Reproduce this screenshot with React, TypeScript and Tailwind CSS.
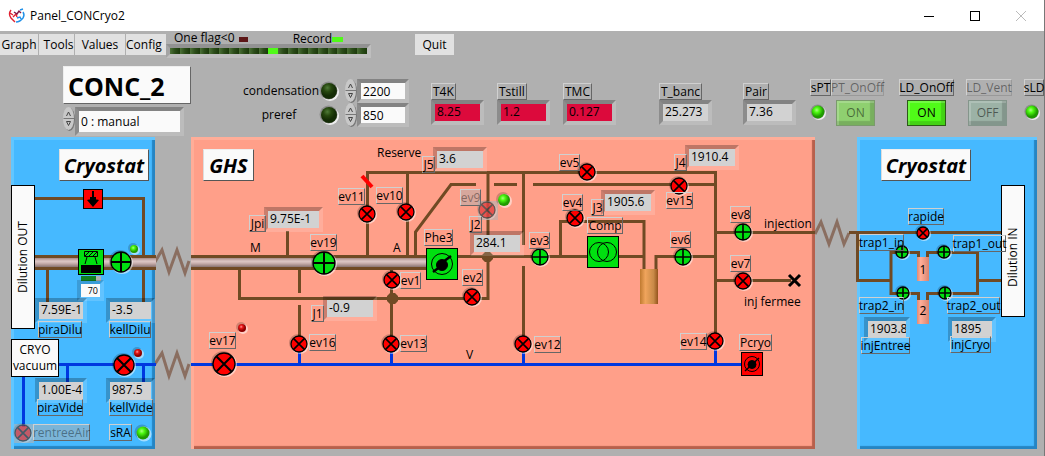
import type { ReactNode } from "react"
import clsx from "clsx"

const PIPE = "#704a24"
const VACUUM = "#0038e0"

type Item = { text: string; at: string; disabled?: boolean }
type Reading = { id: string; value: string; at: string; label: string; labelAt: string }

/* ---------- small drawing parts ---------- */

function Valve({ x, y, r = 8, open = false, faded = false }: { x: number; y: number; r?: number; open?: boolean; faded?: boolean }) {
  const d = open ? r : r * 0.7
  return (
    <g>
      {faded && <rect x={x - 9} y={y - 9} width="20" height="19" fill="#b4b4b4" opacity="0.6" />}
      <g opacity={faded ? 0.5 : 1}>
        <circle cx={x - 1} cy={y - 1} r={r + 1} fill="#000" opacity="0.2" />
        <circle cx={x + 1} cy={y + 1} r={r + 1} fill="#fff" opacity="0.5" />
        <circle cx={x} cy={y} r={r} fill={open ? "#00e010" : "#ff0000"} stroke="#000" strokeWidth="1.3" />
        <path
          d={
            open
              ? `M${x - d} ${y}H${x + d}M${x} ${y - d}V${y + d}`
              : `M${x - d} ${y - d}L${x + d} ${y + d}M${x + d} ${y - d}L${x - d} ${y + d}`
          }
          stroke="#000"
          strokeWidth={r > 9 ? 2 : 1.6}
        />
      </g>
    </g>
  )
}

function Bulb({ x, y, r, color = "green" }: { x: number; y: number; r: number; color?: "green" | "red" }) {
  return (
    <g>
      <circle cx={x - 1} cy={y - 1} r={r + 1} fill="#000" opacity="0.18" />
      <circle cx={x + 1} cy={y + 1} r={r + 1} fill="#fff" opacity="0.5" />
      <circle cx={x} cy={y} r={r} fill={`url(#led-${color})`} />
    </g>
  )
}

const pipeShades = ["#b09490", "#c3a8a6", "#d2bab8", "#dac4c2", "#d2bab8", "#c5acaa", "#b59c9a", "#a38c8a", "#927c7a"]

function BigPipe({ from, to }: { from: number; to: number }) {
  return (
    <g>
      <line x1={from} x2={to} y1="119.5" y2="119.5" stroke={PIPE} strokeWidth="3" />
      {pipeShades.map((c, i) => (
        <line key={c + i} x1={from} x2={to} y1={121.5 + i} y2={121.5 + i} stroke={c} strokeWidth="1" />
      ))}
      <line x1={from} x2={to} y1="131.5" y2="131.5" stroke={PIPE} strokeWidth="3" />
    </g>
  )
}

function Gradients() {
  return (
    <svg className="absolute h-0 w-0" aria-hidden="true">
      <defs>
        <radialGradient id="led-green" cx="0.4" cy="0.35">
          <stop offset="0" stopColor="#a8ff80" />
          <stop offset="0.4" stopColor="#4dfa10" />
          <stop offset="1" stopColor="#1f9a00" />
        </radialGradient>
        <radialGradient id="led-red" cx="0.4" cy="0.35">
          <stop offset="0" stopColor="#ff9a9a" />
          <stop offset="0.4" stopColor="#e81818" />
          <stop offset="1" stopColor="#8a0000" />
        </radialGradient>
        <radialGradient id="led-off" cx="0.4" cy="0.3">
          <stop offset="0" stopColor="#4f7a38" />
          <stop offset="0.5" stopColor="#26470f" />
          <stop offset="1" stopColor="#142c06" />
        </radialGradient>
        <linearGradient id="copper">
          <stop offset="0" stopColor="#c07a30" />
          <stop offset="0.3" stopColor="#f0a45c" />
          <stop offset="0.75" stopColor="#c98a48" />
          <stop offset="1" stopColor="#94541c" />
        </linearGradient>
        <linearGradient id="trap">
          <stop offset="0" stopColor="#e08a74" />
          <stop offset="0.3" stopColor="#ffae98" />
          <stop offset="1" stopColor="#d88470" />
        </linearGradient>
      </defs>
    </svg>
  )
}

/* ---------- labels, readings, inputs ---------- */

const tagStyle =
  "flex h-[17px] items-center justify-center whitespace-nowrap border border-t-[#d0d0d0] border-l-[#d0d0d0] border-r-[#666] border-b-[#666] pt-px text-xs leading-4"

function Tag({ text, at, disabled }: Item) {
  return <span className={clsx("absolute", tagStyle, at, disabled && "bg-[#b0b0b0]/50 text-black/40")}>{text}</span>
}

const sunken =
  "block overflow-hidden border-4 border-t-black/25 border-l-black/20 border-r-white/15 border-b-white/15 bg-clip-padding text-xs leading-4 whitespace-nowrap"

function Readout({ id, value, at, label, labelAt }: Reading) {
  return (
    <>
      <output id={id} className={clsx("absolute h-[25px] bg-[#d2d2d2] pl-0.5", sunken, at)}>
        {value}
      </output>
      <label htmlFor={id} className={clsx("absolute", tagStyle, labelAt)}>
        {label}
      </label>
    </>
  )
}

function Spinner() {
  return (
    <svg className="h-6 w-3 shrink-0" viewBox="0 0 12 24" aria-hidden="true">
      <ellipse cx="6.5" cy="12.5" rx="5.5" ry="11.5" fill="#777" />
      <ellipse cx="5.5" cy="11.5" rx="5.5" ry="11.5" fill="#c8c8c8" />
      <path d="M0.500 11.500H11" stroke="#777" />
      <path d="M3.500 9L5.500 5L7.500 9M3.500 14.500H7.500L5.500 18.500Z" fill="none" stroke="#444" />
    </svg>
  )
}

function StatusLed({ off }: { off?: boolean }) {
  return (
    <svg className={off ? "h-5 w-5 shrink-0" : "h-4 w-4 shrink-0"} viewBox="0 0 20 20" aria-hidden="true">
      <circle cx="11" cy="11" r="9" fill="#eee" />
      <circle cx="9.5" cy="9.5" r="9" fill="#8d8d8d" />
      <circle cx="10" cy="10" r="8" fill={off ? "url(#led-off)" : "url(#led-green)"} />
    </svg>
  )
}

function Setpoint({ id, label, value }: { id: string; label: string; value: string }) {
  return (
    <div className="flex h-6 items-center">
      <label htmlFor={id} className="w-[72px] text-center text-xs">
        {label}
      </label>
      <span className="ml-1 flex w-[26px] items-center">
        <StatusLed off />
      </span>
      <Spinner />
      <input id={id} defaultValue={value} className={clsx("h-6 w-[52px] bg-[#fafafa] pl-0.5", sunken)} />
    </div>
  )
}

function Gauge({ id, label, value, alarm, className }: { id: string; label: string; value: string; alarm?: boolean; className?: string }) {
  return (
    <div className={clsx("flex w-[53px] shrink-0 flex-col items-start", className)}>
      <label htmlFor={id} className={clsx(tagStyle, "px-px")}>
        {label}
      </label>
      <output id={id} className={clsx("h-[25px] w-full pl-0.5", sunken, alarm ? "bg-[#dc0a3c]" : "bg-[#d2d2d2]")}>
        {value}
      </output>
    </div>
  )
}

function Switch({ label, state, className, tone, disabled }: { label: string; state: string; className: string; tone: string; disabled?: boolean }) {
  return (
    <div className={clsx("flex shrink-0 flex-col", className)}>
      <span id={label} className={clsx(tagStyle, disabled && "border-r-[#999] border-b-[#999] text-black/45")}>
        {label}
      </span>
      <button
        type="button"
        aria-describedby={label}
        disabled={disabled}
        className={clsx("mt-1 flex h-[26px] w-[39px] items-center justify-center border text-xs shadow-[inset_2px_2px_0_#ffffff30,inset_-4px_-4px_1px_#00000028]", tone)}
      >
        {state}
      </button>
    </div>
  )
}

function PanelTitle({ children, at }: { children: ReactNode; at: string }) {
  return (
    <h2
      className={clsx(
        "absolute flex h-8 items-center justify-center border border-t-[#eee] border-l-[#ddd] border-r-[#555] border-b-[#555] bg-[#fafafa] pt-0.5 text-xl leading-6 font-bold italic",
        at
      )}
    >
      {children}
    </h2>
  )
}

/* ---------- header ---------- */

function TitleBar() {
  return (
    <header className="flex h-[31px] items-center bg-white">
      <svg className="ml-2 h-4 w-[18px]" viewBox="0 0 18 16" fill="none" strokeWidth="1.4" aria-hidden="true">
        <path d="M3 2Q0 6 3 10L7 14M2 5L5 7M5 9L8 6L9 9" stroke="#e02030" />
        <path d="M6 4L9 6L11 3L13 5" stroke="#801848" />
        <path d="M12 2L15 1M15 4Q17 7 15 10Q12 14 8 14M9 10L12 9L13 11" stroke="#2090e8" />
      </svg>
      <h1 className="ml-1 text-xs">Panel_CONCryo2</h1>
      <div className="ml-auto flex">
        <button type="button" aria-label="Minimize" className="flex h-7 w-[46px] items-center justify-center">
          <svg className="h-3 w-3" viewBox="0 0 12 12" stroke="#000"><path d="M1 6.500H11" /></svg>
        </button>
        <button type="button" aria-label="Maximize" className="flex h-7 w-[46px] items-center justify-center">
          <svg className="h-3 w-3" viewBox="0 0 12 12" fill="none" stroke="#000"><rect x="1.5" y="1.5" width="9" height="9" /></svg>
        </button>
        <button type="button" aria-label="Close" disabled className="flex h-7 w-[46px] items-center justify-center">
          <svg className="h-3 w-3" viewBox="0 0 12 12" stroke="#bbb"><path d="M1 1L11 11M11 1L1 11" /></svg>
        </button>
      </div>
    </header>
  )
}

const menuButton = "flex h-[21px] items-center justify-center overflow-hidden bg-[#e1e1e1] text-xs"

function Toolbar() {
  return (
    <div className="flex h-[35px] items-start">
      <nav className="mt-[3px] flex gap-px">
        <button type="button" className={clsx(menuButton, "w-[38px]")}>Graph</button>
        <button type="button" className={clsx(menuButton, "w-[35px] pl-1")}>Tools</button>
        <button type="button" className={clsx(menuButton, "w-[50px]")}>Values</button>
        <button type="button" className={clsx(menuButton, "w-10 justify-start")}>Config</button>
      </nav>
      <div className="w-[205px]">
        <div className="flex h-[13px] items-center pl-2 text-xs leading-3">
          <span>One flag&lt;0</span>
          <i className="mt-1 ml-1 h-[5px] w-[9px] bg-[#5c1616]" />
          <span className="mt-0.5 ml-auto">Record</span>
          <i className="mt-1 mr-7 h-[5px] w-[11px] bg-[#50fa18]" />
        </div>
        <div className="flex h-3.5 border-4 border-t-[#929292] border-l-[#a4a4a4] border-r-[#bebebe] border-b-[#bebebe]">
          {Array.from({ length: 20 }, (_, i) => (
            <i
              key={i}
              className={clsx(
                "h-1.5 flex-1",
                i === 10 ? "bg-[#50fa18]" : "bg-linear-to-r from-[#4d7238] via-[#2c4d1a] to-[#1c3a0c]"
              )}
            />
          ))}
        </div>
      </div>
      <button type="button" className={clsx(menuButton, "mt-[3px] ml-11 w-[39px]")}>Quit</button>
    </div>
  )
}

function StatusRow() {
  return (
    <div className="flex h-[71px] items-start">
      <div className="ml-[63px] w-32 shrink-0">
        <div className="flex h-[38px] items-center border border-t-[#eee] border-l-[#eee] border-r-[#666] border-b-[#666] bg-[#fafafa] pt-1 pl-1 text-[25px] font-bold">
          CONC_2
        </div>
        <div className="flex items-start pt-[3px]">
          <Spinner />
          <select
            aria-label="mode"
            className={clsx("h-[29px] w-[109px] appearance-none bg-[#fafafa] pl-0.5", sunken)}
          >
            <option>0 : manual</option>
          </select>
        </div>
      </div>

      <div className="mt-[13px] ml-[52px] shrink-0">
        <Setpoint id="condensation" label="condensation" value="2200" />
        <Setpoint id="preref" label="preref" value="850" />
      </div>

      <div className="mt-[17px] ml-[22px] flex">
        <Gauge id="t4k" label="T4K" value="8.25" alarm />
        <Gauge id="tstill" label="Tstill" value="1.2" alarm className="ml-[13px]" />
        <Gauge id="tmc" label="TMC" value="0.127" alarm className="ml-[13px]" />
        <Gauge id="tbanc" label="T_banc" value="25.273" className="ml-[43px]" />
        <Gauge id="pair" label="Pair" value="7.36" className="ml-[31px]" />
      </div>

      <div className="mt-[13px] ml-auto flex">
        <div className="w-[21px] shrink-0">
          <span className={tagStyle}>sPT</span>
          <div className="mt-2"><StatusLed /></div>
        </div>
        <Switch label="PT_OnOff" state="ON" disabled className="w-[53px] [&>button]:ml-[5px]" tone="border-[#7a9a6c] bg-[#8fd070] text-black/50" />
        <Switch label="LD_OnOff" state="ON" className="ml-[15px] w-[55px] [&>button]:ml-2" tone="border-[#2c5a18] bg-[#50fa18]" />
        <Switch label="LD_Vent" state="OFF" disabled className="ml-3 w-[46px] [&>button]:ml-0.5" tone="border-[#84958b] bg-[#9cb2a6] text-black/50" />
        <div className="ml-3 w-5 shrink-0">
          <span className={tagStyle}>sLD</span>
          <div className="mt-2"><StatusLed /></div>
        </div>
      </div>
    </div>
  )
}

/* ---------- left cryostat ---------- */

const outReadings: Reading[] = [
  { id: "piraDilu", value: "7.59E-1", at: "left-[24px] top-[161px] w-[52px]", label: "piraDilu", labelAt: "left-[27px] top-[184px] w-[44px]" },
  { id: "kellDilu", value: "-3.5", at: "left-[95px] top-[161px] w-[49px]", label: "kellDilu", labelAt: "left-[98px] top-[184px] w-[42px]" },
  { id: "piraVide", value: "1.00E-4", at: "left-[24px] top-[241px] w-[52px]", label: "piraVide", labelAt: "left-[26px] top-[262px] w-[46px]" },
  { id: "kellVide", value: "987.5", at: "left-[95px] top-[241px] w-[49px]", label: "kellVide", labelAt: "left-[98px] top-[262px] w-[44px]" },
]

function CryostatOut() {
  return (
    <section className="relative w-36 shrink-0 bg-[#46b9ff] shadow-[inset_3px_3px_0_#62c6ff,inset_-3px_-3px_1px_#2585c4]">
      <svg className="block h-78 w-full overflow-visible" fill="none" strokeWidth="3" aria-hidden="true">
        <path d="M24 61.500H132.500V119M36.500 132V165M132.500 132V165" stroke={PIPE} />
        <BigPipe from={24} to={145} />
        <path d="M48 227.500H145M12.500 240V290M56.500 227V245M132.500 227V245" stroke={VACUUM} />
        <rect x="72.5" y="52.5" width="19" height="19" fill="#f00" stroke="#000" strokeWidth="1" />
        <path d="M82 54V61" stroke="#000" strokeWidth="2" />
        <path d="M76 63L80 62H84L88 63L82 70ZM79 60H85V66H79Z" fill="#000" />
        <rect x="67.5" y="112.5" width="25" height="25" fill="#00e010" stroke="#000" strokeWidth="1" />
        <path d="M73.500 114.500H86.500V119.500H73.500ZM74 119L78 115M78 119L82 115M82 119L86 115M76 120L74 127M84 120L86 127" stroke="#000" strokeWidth="1" />
        <rect x="70" y="128" width="20" height="8" fill="#000" />
        <rect x="70" y="139" width="20" height="5" fill="#b0b0b0" />
        <rect x="70" y="139" width="15" height="5" fill="#108020" />
        <Valve x={110} y={125} r={10} open />
        <Bulb x={123} y={112} r={4} />
        <Valve x={113} y={228} r={10} />
        <Bulb x={127} y={216} r={4} color="red" />
        <Valve x={12} y={296} faded />
        <Bulb x={132} y={296} r={6.5} />
      </svg>
      <PanelTitle at="left-[48px] top-[12px] w-[90px]">Cryostat</PanelTitle>
      <div className="absolute top-12 left-0 flex h-36 w-6 rotate-180 items-center justify-center border border-black bg-[#fafafa] text-xs leading-4 [writing-mode:vertical-rl]">
        Dilution OUT
      </div>
      <div className="absolute top-[202px] left-0 flex h-[38px] w-12 flex-col items-center justify-center border border-black bg-[#fafafa] text-xs leading-4">
        <span>CRYO</span>
        <span>vacuum</span>
      </div>
      <input
        aria-label="speed"
        defaultValue="70"
        className="absolute top-[143px] left-[66px] h-[21px] w-[27px] border-4 border-t-black/15 border-l-black/15 border-r-white/15 border-b-white/15 bg-[#fafafa] bg-clip-padding pr-0.5 text-right text-[9px] leading-3"
      />
      {outReadings.map((r) => (
        <Readout key={r.id} {...r} />
      ))}
      <Tag text="rentreeAir" at="left-[22px] top-[287px] w-[57px]" disabled />
      <Tag text="sRA" at="left-[98px] top-[287px] w-[23px]" />
    </section>
  )
}

/* ---------- gas handling system ---------- */

const ghsReadings: Reading[] = [
  { id: "j5", value: "3.6", at: "left-[242px] top-[10px] w-[54px]", label: "J5", labelAt: "left-[231px] top-[19px] w-[13px]" },
  { id: "jpi", value: "9.75E-1", at: "left-[73px] top-[70px] w-[59px]", label: "Jpi", labelAt: "left-[58px] top-[78px] w-[17px]" },
  { id: "j2", value: "284.1", at: "left-[279px] top-[94px] w-[54px]", label: "J2", labelAt: "left-[278px] top-[79px] w-[13px]" },
  { id: "j4", value: "1910.4", at: "left-[494px] top-[8px] w-[54px]", label: "J4", labelAt: "left-[483px] top-[17px] w-[13px]" },
  { id: "j3", value: "1905.6", at: "left-[410px] top-[53px] w-[54px]", label: "J3", labelAt: "left-[400px] top-[62px] w-[13px]" },
  { id: "j1", value: "-0.9", at: "left-[132px] top-[159px] w-[54px]", label: "J1", labelAt: "left-[120px] top-[168px] w-[13px]" },
]

const ghsTags: Item[] = [
  { text: "ev11", at: "left-[147px] top-[51px] w-[27px]" },
  { text: "ev10", at: "left-[185px] top-[50px] w-[27px]" },
  { text: "ev9", at: "left-[269px] top-[52px] w-[21px]", disabled: true },
  { text: "Phe3", at: "left-[233px] top-[92px] w-[29px]" },
  { text: "ev3", at: "left-[338px] top-[95px] w-[21px]" },
  { text: "ev2", at: "left-[271px] top-[132px] w-[21px]" },
  { text: "ev1", at: "left-[209px] top-[135px] w-[21px]" },
  { text: "ev19", at: "left-[119px] top-[97px] w-[27px]" },
  { text: "ev5", at: "left-[368px] top-[17px] w-[21px]" },
  { text: "ev15", at: "left-[475px] top-[55px] w-[27px]" },
  { text: "ev4", at: "left-[371px] top-[57px] w-[21px]" },
  { text: "Comp", at: "left-[396px] top-[80px] w-[36px]" },
  { text: "ev6", at: "left-[479px] top-[94px] w-[21px]" },
  { text: "ev8", at: "left-[539px] top-[69px] w-[21px]" },
  { text: "ev7", at: "left-[539px] top-[118px] w-[21px]" },
  { text: "ev14", at: "left-[489px] top-[196px] w-[27px]" },
  { text: "Pcryo", at: "left-[548px] top-[197px] w-[33px]" },
  { text: "ev17", at: "left-[18px] top-[195px] w-[27px]" },
  { text: "ev16", at: "left-[118px] top-[197px] w-[27px]" },
  { text: "ev13", at: "left-[209px] top-[198px] w-[27px]" },
  { text: "ev12", at: "left-[343px] top-[199px] w-[27px]" },
]

const ghsNotes: Item[] = [
  { text: "Reserve", at: "left-[186px] top-[8px]" },
  { text: "M", at: "left-[59px] top-[103px]" },
  { text: "A", at: "left-[202px] top-[103px]" },
  { text: "injection", at: "left-[573px] top-[79px]" },
  { text: "inj fermee", at: "left-[553px] top-[157px]" },
  { text: "V", at: "left-[275px] top-[210px]" },
]

const ghsValves = [
  { x: 176, y: 77 },
  { x: 215, y: 75 },
  { x: 296, y: 73, faded: true },
  { x: 349, y: 120, open: true },
  { x: 281, y: 160 },
  { x: 201, y: 143 },
  { x: 133, y: 126, r: 11, open: true },
  { x: 396, y: 35 },
  { x: 488, y: 49 },
  { x: 384, y: 81 },
  { x: 492, y: 120, open: true },
  { x: 552, y: 95, open: true },
  { x: 552, y: 144 },
  { x: 524, y: 204 },
  { x: 33, y: 227, r: 11 },
  { x: 108, y: 207 },
  { x: 200, y: 207 },
  { x: 332, y: 207 },
]

function Ghs() {
  return (
    <section className="relative min-w-[624px] flex-1 bg-[#ff9f89] shadow-[inset_3px_3px_0_#ffad98,inset_-3px_-3px_1px_#b8604c]">
      <svg className="block h-78 w-full" fill="none" strokeWidth="3" aria-hidden="true">
        <g stroke={PIPE}>
          <path d="M176.500 119V35.500H524.500V205M216.500 36V119M96.500 94V119M48.500 132V161.500H297V36" />
          <path d="M108.500 132V156M108.500 168V206M224.500 119V95L260 47.500H285M303 47.500H326M342 47.500H524" />
          <path d="M332.500 36V108M332.500 129V206M266 119.500H454M369.500 120V84.500H453V132M465 132V119.500H524" />
          <path d="M524 143.500H600M200.500 130V206" />
          <line x1="524" x2="100%" y1="95.5" y2="95.5" />
        </g>
        <BigPipe from={0} to={236} />
        <path d="M0 227.500H550M108.500 208V227M200.500 208V227M332.500 208V227M524.500 208V227" stroke={VACUUM} />
        <path d="M199 156H204L207 159V164L204 167H199L196 164V159ZM294 115H299L302 118V122L299 125H294L291 122V118Z" fill={PIPE} />
        <path d="M171 39L181 50" stroke="#f00" strokeWidth="4" />
        <path d="M598 138L609 149M609 138L598 149" stroke="#000" />
        <rect x="449" y="132" width="18" height="35" fill="url(#copper)" />

        <g strokeWidth="1" stroke="#000">
          <rect x="235.5" y="111.5" width="31" height="31" fill="#00e010" />
          <circle cx="251" cy="127" r="10.5" />
          <circle cx="251" cy="128" r="5.5" fill="#000" />
          <path d="M242 135L250 129M252 125L260 119" strokeWidth="2.5" />
          <rect x="396.5" y="99.5" width="31" height="31" fill="#00e010" />
          <circle cx="408" cy="115" r="9.5" />
          <circle cx="416" cy="115" r="9.5" />
          <rect x="550.5" y="215.5" width="21" height="23" fill="#f00" />
          <circle cx="561" cy="227" r="7.5" />
          <circle cx="561" cy="227.5" r="4" fill="#000" />
          <path d="M554 234L568 221" strokeWidth="1.5" />
        </g>

        {ghsValves.map((v) => (
          <Valve key={`${v.x}-${v.y}`} {...v} />
        ))}
        <Bulb x={313} y={63} r={6} />
        <Bulb x={51} y={191} r={4} color="red" />
      </svg>
      <PanelTitle at="left-[12px] top-[12px] w-[51px]">GHS</PanelTitle>
      {ghsReadings.map((r) => (
        <Readout key={r.id} {...r} />
      ))}
      {ghsTags.map((t) => (
        <Tag key={t.text} {...t} />
      ))}
      {ghsNotes.map((n) => (
        <span key={n.text} className={clsx("absolute text-xs leading-4 whitespace-nowrap", n.at)}>
          {n.text}
        </span>
      ))}
    </section>
  )
}

/* ---------- right cryostat ---------- */

const inReadings: Reading[] = [
  { id: "injEntree", value: "1903.8", at: "left-[7px] top-[180px] w-[46px]", label: "injEntree", labelAt: "left-[4px] top-[200px] w-[49px]" },
  { id: "injCryo", value: "1895", at: "left-[91px] top-[180px] w-[48px]", label: "injCryo", labelAt: "left-[93px] top-[199px] w-[41px]" },
]

const inTags: Item[] = [
  { text: "rapide", at: "left-[51px] top-[71px] w-[36px]" },
  { text: "trap1_in", at: "left-[2px] top-[97px] w-[45px]" },
  { text: "trap1_out", at: "left-[96px] top-[98px] w-[53px]" },
  { text: "trap2_in", at: "left-[2px] top-[160px] w-[45px]" },
  { text: "trap2_out", at: "left-[90px] top-[160px] w-[53px]" },
]

function CryostatIn() {
  return (
    <section className="relative w-45 shrink-0 bg-[#46b9ff] shadow-[inset_3px_3px_0_#62c6ff,inset_-3px_-3px_1px_#2585c4]">
      <svg className="block h-78 w-full overflow-visible" fill="none" strokeWidth="3" aria-hidden="true">
        <path
          d="M0 95.500H144M0.500 95V143.500H34M61.500 120V115.500H34V156.500H61.500V163M70.500 120V115.500H120.500V156.500H70.500V163M120 143.500H144"
          stroke={PIPE}
        />
        <rect x="60" y="120" width="12" height="24" fill="url(#trap)" />
        <rect x="60" y="163" width="12" height="24" fill="url(#trap)" />
        <Valve x={66} y={96} r={6} />
        <Valve x={45} y={115} r={6} open />
        <Valve x={87} y={115} r={6} open />
        <Valve x={46} y={156} r={6} open />
        <Valve x={88} y={156} r={6} open />
      </svg>
      <PanelTitle at="left-[24px] top-[12px] w-[90px]">Cryostat</PanelTitle>
      <div className="absolute top-12 left-36 flex h-33 w-6 rotate-180 items-center justify-center border border-black bg-[#fafafa] pt-0 pb-3 text-xs leading-4 [writing-mode:vertical-rl]">
        Dilution IN
      </div>
      <span className="absolute top-[125px] left-[60px] w-3 text-center text-xs leading-4">1</span>
      <span className="absolute top-[166px] left-[60px] w-3 text-center text-xs leading-4">2</span>
      {inReadings.map((r) => (
        <Readout key={r.id} {...r} />
      ))}
      {inTags.map((t) => (
        <Tag key={t.text} {...t} />
      ))}
    </section>
  )
}

export default function App() {
  return (
    <div className="min-h-screen border-r border-[#777] bg-[#b0b0b0] font-['Open_Sans','Noto_Sans',sans-serif] text-black">
      <Gradients />
      <TitleBar />
      <Toolbar />
      <StatusRow />
      <main className="flex pr-[7px] pb-[7px] pl-[11px]">
        <CryostatOut />
        <svg className="h-78 w-9 shrink-0 overflow-visible" fill="none" stroke="#8a6e60" strokeWidth="3" aria-hidden="true">
          <path d="M0 125L7 113L14 135L22 113L30 136L34 124" />
          <path d="M0 227L7 216L14 239L22 216L30 239L34 227" />
        </svg>
        <Ghs />
        <svg className="h-78 w-[42px] shrink-0 overflow-visible" fill="none" stroke="#8a6e60" strokeWidth="3" aria-hidden="true">
          <path d="M0 97L6 85L14 107L22 85L29 107L34 96" />
          <path d="M34 95.500H42" stroke={PIPE} />
        </svg>
        <CryostatIn />
      </main>
    </div>
  )
}
